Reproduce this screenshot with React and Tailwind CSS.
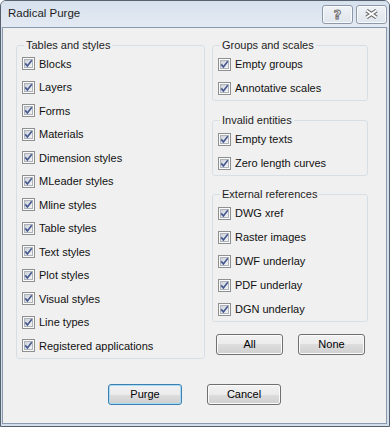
const tableItems = [
  'Blocks',
  'Layers',
  'Forms',
  'Materials',
  'Dimension styles',
  'MLeader styles',
  'Mline styles',
  'Table styles',
  'Text styles',
  'Plot styles',
  'Visual styles',
  'Line types',
  'Registered applications',
]

const groupItems = ['Empty groups', 'Annotative scales']
const invalidItems = ['Empty texts', 'Zero length curves']
const xrefItems = ['DWG xref', 'Raster images', 'DWF underlay', 'PDF underlay', 'DGN underlay']

function CheckBox() {
  return (
    <svg width="13" height="13" viewBox="0 0 13 13" className="shrink-0">
      <defs>
        <linearGradient id="cbfill" x1="0" y1="0" x2="1" y2="1">
          <stop offset="0" stopColor="#cbd0d8" />
          <stop offset="1" stopColor="#f6f6f6" />
        </linearGradient>
      </defs>
      <rect x="0.5" y="0.5" width="12" height="12" fill="#fafafa" stroke="#8e8f8f" />
      <rect x="2.5" y="2.5" width="8" height="8" fill="url(#cbfill)" stroke="#aeb3ba" />
      <path d="M3.2 6.4 L5.4 8.9 L9.8 3.3" fill="none" stroke="#46598f" strokeWidth="1.6" />
    </svg>
  )
}

function Row({ label, tall }) {
  return (
    <label className={`flex items-center gap-[4px] ${tall ? 'h-[24px]' : 'h-[23.5px]'}`}>
      <CheckBox />
      <span className="whitespace-nowrap">{label}</span>
    </label>
  )
}

function Group({ title, children, className }) {
  return (
    <fieldset className={`border border-[#d5dfe5] rounded-[3px] px-[5px] ${className}`}>
      <legend className="ml-[2px] px-[2px] leading-[13px] text-[#1e1e1e]">{title}</legend>
      {children}
    </fieldset>
  )
}

function Button({ children, isDefault, small }) {
  return (
    <button
      type="button"
      className={`h-[21px] rounded-[3px] border text-[11px] text-black bg-[linear-gradient(#f2f2f2_0%,#ebebeb_50%,#dddddd_50%,#cfcfcf_100%)] ${
        small ? 'w-[67px]' : 'w-[74px]'
      } ${
        isDefault
          ? 'border-[#3c7fb1] shadow-[inset_0_0_0_1px_#a8dcf4]'
          : 'border-[#707070] shadow-[inset_0_0_0_1px_#fbfbfb]'
      }`}
    >
      {children}
    </button>
  )
}

export default function App() {
  return (
    <div className="w-[390px] h-[427px] flex flex-col bg-[#d3deeb] border border-[#56606e] rounded-t-[6px] overflow-hidden font-['Liberation_Sans',Arial,sans-serif] text-[11px] text-[#111]">
      {/* Title bar */}
      <div className="h-[26px] flex items-center pl-[7px] pr-[2px] bg-[linear-gradient(#d6e1ee,#e4eaf2)]">
        <span className="flex-1 text-[11.5px] text-[#1f1f1f]">Radical Purge</span>
        <div className="flex gap-[3px]">
          <div className="w-[31px] h-[19px] rounded-[3px] border border-[#8d99aa] bg-[linear-gradient(#f0f3f7,#dfe5ed)] shadow-[inset_0_0_0_1px_#f8fafc] flex items-center justify-center">
            <span className="font-['DejaVu_Sans',sans-serif] font-bold text-[13px] leading-none text-white [-webkit-text-stroke:1px_#6a6a6a]">?</span>
          </div>
          <div className="w-[31px] h-[19px] rounded-[3px] border border-[#8d99aa] bg-[linear-gradient(#f0f3f7,#dfe5ed)] shadow-[inset_0_0_0_1px_#f8fafc] flex items-center justify-center">
            <svg width="15" height="10" viewBox="0 0 15 10">
              <path d="M2.5 1.5 L12.5 8.5 M12.5 1.5 L2.5 8.5" stroke="#6d6d6d" strokeWidth="4" />
              <path d="M2.5 1.5 L12.5 8.5 M12.5 1.5 L2.5 8.5" stroke="#ffffff" strokeWidth="2" />
            </svg>
          </div>
        </div>
      </div>

      {/* Body */}
      <div className="flex-1 ml-[1px] mr-[2px] mb-[2px] border border-[#8a99ad] bg-[#f0f0f0] flex flex-col">
        <div className="flex gap-[7px] pl-[13px] pt-[11px]">
          <Group title="Tables and styles" className="w-[189px]">
            {tableItems.map(item => (
              <Row key={item} label={item} />
            ))}
          </Group>

          <div className="w-[156px] flex flex-col">
            <Group title="Groups and scales">
              {groupItems.map(item => (
                <Row key={item} label={item} tall />
              ))}
            </Group>
            <Group title="Invalid entities" className="mt-[13px]">
              {invalidItems.map(item => (
                <Row key={item} label={item} tall />
              ))}
            </Group>
            <Group title="External references" className="mt-[12px]">
              {xrefItems.map(item => (
                <Row key={item} label={item} tall />
              ))}
            </Group>
            <div className="flex gap-[15px] ml-[4px] mt-[12px]">
              <Button small>All</Button>
              <Button small>None</Button>
            </div>
          </div>
        </div>

        {/* Dialog buttons */}
        <div className="flex justify-center gap-[25px] mt-[25px]">
          <Button isDefault>Purge</Button>
          <Button>Cancel</Button>
        </div>
      </div>
    </div>
  )
}
